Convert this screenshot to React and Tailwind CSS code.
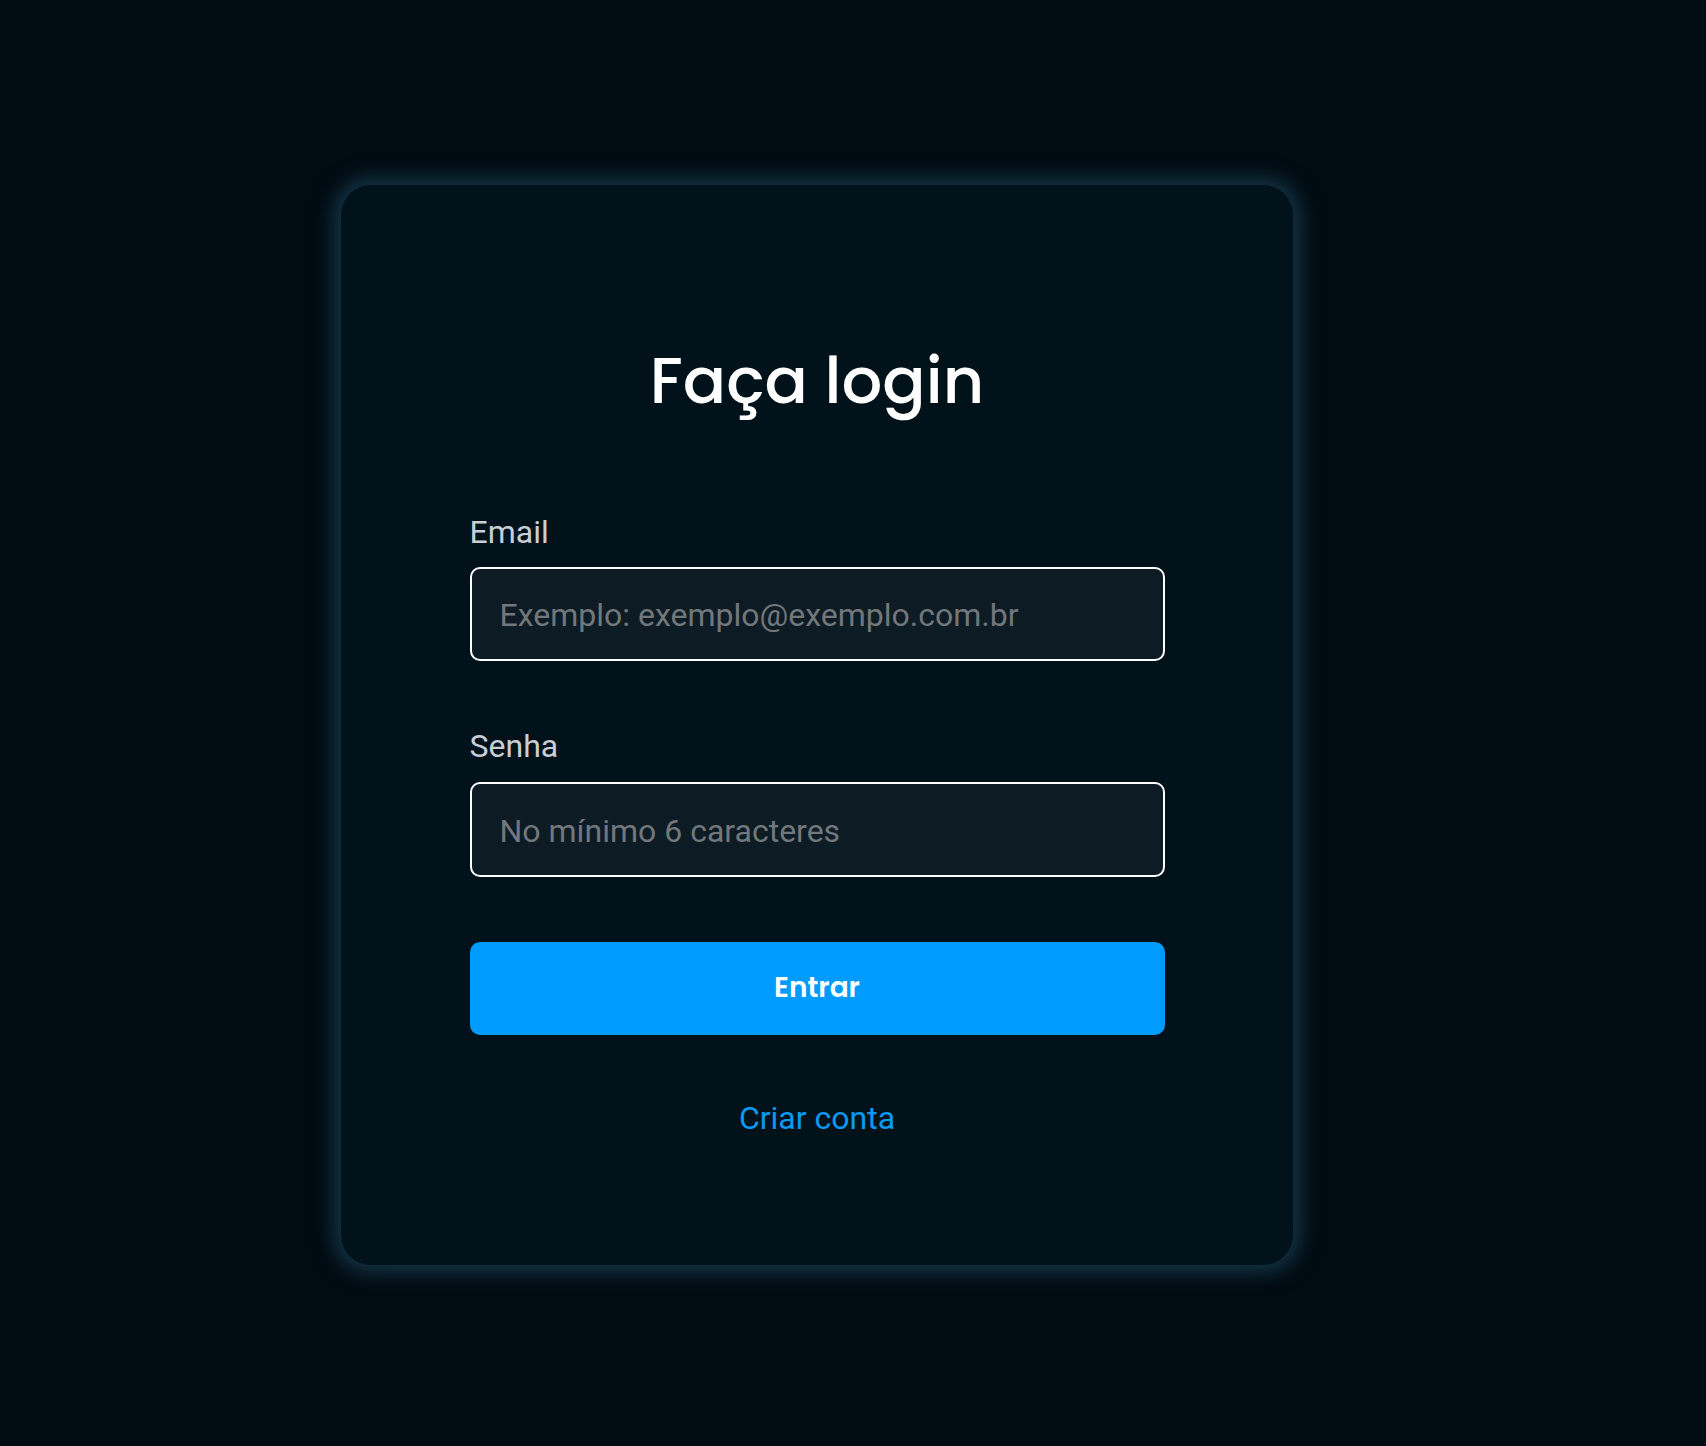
export default function App() {
  return (
    <div className="min-h-[1446px] w-full bg-[#010b12] flex items-center justify-center pr-[72px] pt-[3px]" style={{ fontFamily: 'Roboto, "Liberation Sans", sans-serif' }}>
      <div className="w-[952px] h-[1080px] rounded-[30px] bg-[#01121b] shadow-[0_0_20px_8px_rgba(34,78,104,0.6)] flex flex-col items-center pt-[148px]">
        <h1 className="text-[64px] leading-[96px] font-medium text-white" style={{ fontFamily: 'Poppins, Inter, "Noto Sans", sans-serif' }}>
          Faça login
        </h1>
        <form className="w-[695px] mt-[79px] flex flex-col" onSubmit={e => e.preventDefault()}>
          <label className="text-[32px] leading-[48px] text-[#c9ced6]">Email</label>
          <input
            type="email"
            placeholder="Exemplo: exemplo@exemplo.com.br"
            className="mt-[11px] h-[94px] w-full rounded-[10px] border-2 border-white bg-[#0d1b24] px-[28px] pt-[3px] text-[32px] text-white placeholder:text-[#72777b] outline-none"
          />
          <label className="mt-[61px] text-[32px] leading-[48px] text-[#c9ced6]">Senha</label>
          <input
            type="password"
            placeholder="No mínimo 6 caracteres"
            className="mt-[12px] h-[95px] w-full rounded-[10px] border-2 border-white bg-[#0d1b24] px-[28px] pt-[3px] text-[32px] text-white placeholder:text-[#72777b] outline-none"
          />
          <button type="submit" className="mt-[65px] h-[93px] w-full rounded-[10px] bg-[#009bff] text-[28px] font-semibold text-white" style={{ fontFamily: 'Poppins, Inter, "Noto Sans", sans-serif' }}>
            Entrar
          </button>
          <a href="#" className="mt-[59px] self-center text-[32px] leading-[48px] text-[#0a9af2]">Criar conta</a>
        </form>
      </div>
    </div>
  );
}
